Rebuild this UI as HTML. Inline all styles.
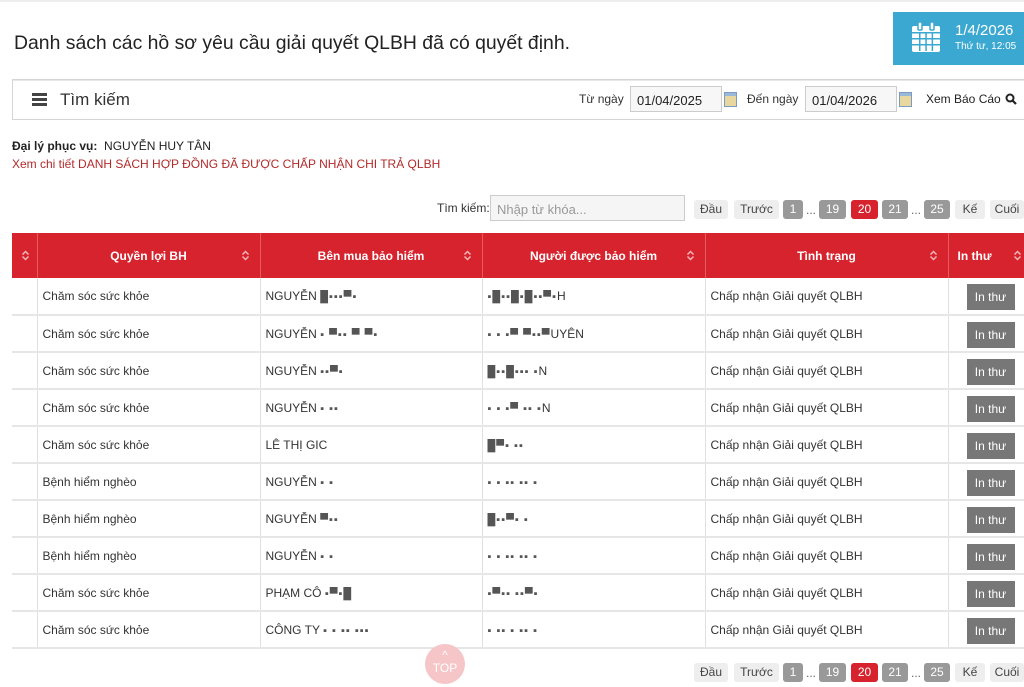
<!DOCTYPE html>
<html><head><meta charset="utf-8"><style>
*{box-sizing:border-box;margin:0;padding:0}
body{width:1024px;height:687px;overflow:hidden;background:#fff;font-family:"Liberation Sans",sans-serif;color:#333;position:relative}
.abs{position:absolute}
.topline{top:0;left:0;width:1024px;height:2px;background:#eee}
h1{position:absolute;left:14px;top:32px;font-size:19.4px;font-weight:normal;color:#222}
.date{left:893px;top:12px;width:131px;height:53px;background:#3aa8d0;color:#fff}
.bar{left:12px;top:79px;width:1012px;height:41px;border:1px solid #d5d5d5;border-right:none;box-shadow:inset 0 1px 0 #e8e8e8}
.inp{position:absolute;height:26px;border:1px solid #ccc;background:#f7f7f7;font-size:13px;padding:6px 6px;color:#222}
.cal{position:absolute;width:13px;height:15px;background:linear-gradient(#9ab8d8 0 3px,#e8d8a0 3px);border:1px solid #7a9cc0}
.pg{position:absolute;height:19px;font-size:12px;line-height:19px;text-align:center;border-radius:3px}
.pl{background:#eee;color:#444}
.pn{background:#999;color:#fff}
.pa{background:#d7232e;color:#fff}
.dots{position:absolute;font-size:12px;color:#666}
table{position:absolute;left:12px;top:233px;border-collapse:collapse;font-size:12px;table-layout:fixed;width:1026px}
th{background:#d7232e;color:#fff;height:45px;font-weight:bold;border-right:1px solid #e85a60;position:relative;text-align:center}
th svg{position:absolute;right:10px;top:17px}
td{height:37px;border-right:1px solid #e0e0e0;border-bottom:2px solid #e6e6e6;padding-left:5px;color:#333;white-space:nowrap;overflow:hidden}
.bl{color:#555;letter-spacing:1px;font-size:11px}
.btn{display:inline-block;background:#777;color:#fff;width:48px;height:26px;line-height:26px;text-align:center;font-size:12px;margin-left:13px;margin-top:2px}
</style></head><body>
<div class="abs topline"></div>
<h1>Danh sách các hồ sơ yêu cầu giải quyết QLBH đã có quyết định.</h1>
<div class="abs date">
<svg class="abs" style="left:18px;top:9px" width="30" height="32" viewBox="0 0 30 32"><rect x="1" y="5" width="28" height="26" rx="2" fill="#fff"/><rect x="7" y="1" width="4" height="8" rx="1" fill="#fff" stroke="#3aa8d0" stroke-width="1.5"/><rect x="19" y="1" width="4" height="8" rx="1" fill="#fff" stroke="#3aa8d0" stroke-width="1.5"/><g fill="#3aa8d0"><rect x="1" y="11" width="28" height="1.5"/><rect x="1" y="17" width="28" height="1.5"/><rect x="1" y="23" width="28" height="1.5"/><rect x="8" y="11" width="1.5" height="19"/><rect x="14.3" y="11" width="1.5" height="19"/><rect x="20.6" y="11" width="1.5" height="19"/></g></svg>
<div class="abs" style="left:62px;top:10px;font-size:15px">1/4/2026</div>
<div class="abs" style="left:62px;top:29px;font-size:10px">Thứ tư, 12:05</div>
</div>
<div class="abs bar">
<div class="abs" style="left:19px;top:13px;width:15px;height:13px;border-top:3px solid #444;border-bottom:3px solid #444"><div style="margin-top:2px;height:3px;background:#444"></div></div>
<div class="abs" style="left:47px;top:10px;font-size:17px;color:#333">Tìm kiếm</div>
<div class="abs" style="left:566px;top:12px;font-size:12px">Từ ngày</div>
<div class="inp" style="left:617px;top:6px;width:92px">01/04/2025</div>
<div class="cal" style="left:711px;top:12px"></div>
<div class="abs" style="left:734px;top:12px;font-size:12px">Đến ngày</div>
<div class="inp" style="left:792px;top:6px;width:92px">01/04/2026</div>
<div class="cal" style="left:886px;top:12px"></div>
<div class="abs" style="left:913px;top:12px;font-size:12px;color:#222">Xem Báo Cáo</div>
<svg class="abs" style="left:992px;top:13px" width="12" height="12" viewBox="0 0 12 12"><circle cx="5" cy="5" r="3.5" fill="none" stroke="#222" stroke-width="2"/><path d="M7.5 7.5L11 11" stroke="#222" stroke-width="2.2"/></svg>
</div>
<div class="abs" style="left:12px;top:139px;font-size:12px;color:#222"><b>Đại lý phục vụ:</b>&nbsp; NGUYỄN HUY TÂN</div>
<div class="abs" style="left:12px;top:157px;font-size:12px;color:#b22a2a">Xem chi tiết DANH SÁCH HỢP ĐỒNG ĐÃ ĐƯỢC CHẤP NHẬN CHI TRẢ QLBH</div>
<div class="abs" style="left:437px;top:201px;font-size:12px">Tìm kiếm:</div>
<div class="inp" style="left:490px;top:195px;width:195px;height:26px;background:#f5f5f5;color:#999">Nhập từ khóa...</div>

<div class="pg pl" style="left:694px;top:200px;width:34px">Đầu</div>
<div class="pg pl" style="left:734px;top:200px;width:45px">Trước</div>
<div class="pg pn" style="left:783px;top:200px;width:20px">1</div>
<div class="dots" style="left:806px;top:203px">...</div>
<div class="pg pn" style="left:819px;top:200px;width:27px">19</div>
<div class="pg pa" style="left:851px;top:200px;width:27px">20</div>
<div class="pg pn" style="left:882px;top:200px;width:26px">21</div>
<div class="dots" style="left:911px;top:203px">...</div>
<div class="pg pn" style="left:924px;top:200px;width:26px">25</div>
<div class="pg pl" style="left:955px;top:200px;width:30px">Kế</div>
<div class="pg pl" style="left:990px;top:200px;width:34px">Cuối</div>

<table>
<colgroup><col style="width:25px"><col style="width:223px"><col style="width:222px"><col style="width:223px"><col style="width:243px"><col style="width:90px"></colgroup>
<tr><th><svg style="right:7px" width="9" height="11" viewBox="0 0 9 11"><path d="M1.5 4.5L4.5 1.5 7.5 4.5M1.5 6.5L4.5 9.5 7.5 6.5" fill="none" stroke="#f5b5b8" stroke-width="1.5"/></svg></th>
<th>Quyền lợi BH<svg width="9" height="11" viewBox="0 0 9 11"><path d="M1.5 4.5L4.5 1.5 7.5 4.5M1.5 6.5L4.5 9.5 7.5 6.5" fill="none" stroke="#f5b5b8" stroke-width="1.5"/></svg></th>
<th>Bên mua bảo hiểm<svg width="9" height="11" viewBox="0 0 9 11"><path d="M1.5 4.5L4.5 1.5 7.5 4.5M1.5 6.5L4.5 9.5 7.5 6.5" fill="none" stroke="#f5b5b8" stroke-width="1.5"/></svg></th>
<th>Người được bảo hiểm<svg width="9" height="11" viewBox="0 0 9 11"><path d="M1.5 4.5L4.5 1.5 7.5 4.5M1.5 6.5L4.5 9.5 7.5 6.5" fill="none" stroke="#f5b5b8" stroke-width="1.5"/></svg></th>
<th>Tình trạng<svg width="9" height="11" viewBox="0 0 9 11"><path d="M1.5 4.5L4.5 1.5 7.5 4.5M1.5 6.5L4.5 9.5 7.5 6.5" fill="none" stroke="#f5b5b8" stroke-width="1.5"/></svg></th>
<th style="text-align:left;padding-left:9px">In thư<svg style="right:16px" width="9" height="11" viewBox="0 0 9 11"><path d="M1.5 4.5L4.5 1.5 7.5 4.5M1.5 6.5L4.5 9.5 7.5 6.5" fill="none" stroke="#f5b5b8" stroke-width="1.5"/></svg></th></tr>
<tr><td></td><td>Chăm sóc sức khỏe</td><td>NGUYỄN <span class="bl">█▪▪▪▀▪</span></td><td><span class="bl">▪█▪▪█▪█▪▪▀▪</span>H</td><td>Chấp nhận Giải quyết QLBH</td><td><span class="btn">In thư</span></td></tr>
<tr><td></td><td>Chăm sóc sức khỏe</td><td>NGUYỄN <span class="bl">▪ ▀▪▪ ▀  ▀▪</span></td><td><span class="bl">▪ ▪ ▪▀ ▀▪▪▀</span>UYÊN</td><td>Chấp nhận Giải quyết QLBH</td><td><span class="btn">In thư</span></td></tr>
<tr><td></td><td>Chăm sóc sức khỏe</td><td>NGUYỄN <span class="bl">▪▪▀▪</span></td><td><span class="bl">█▪▪█▪▪▪ ▪</span>N</td><td>Chấp nhận Giải quyết QLBH</td><td><span class="btn">In thư</span></td></tr>
<tr><td></td><td>Chăm sóc sức khỏe</td><td>NGUYỄN <span class="bl">▪ ▪▪</span></td><td><span class="bl">▪ ▪ ▪▀ ▪▪ ▪</span>N</td><td>Chấp nhận Giải quyết QLBH</td><td><span class="btn">In thư</span></td></tr>
<tr><td></td><td>Chăm sóc sức khỏe</td><td>LÊ THỊ GIC</td><td><span class="bl">█▀▪ ▪▪</span></td><td>Chấp nhận Giải quyết QLBH</td><td><span class="btn">In thư</span></td></tr>
<tr><td></td><td>Bệnh hiểm nghèo</td><td>NGUYỄN <span class="bl">  ▪ ▪</span></td><td><span class="bl">▪ ▪ ▪▪ ▪▪ ▪</span></td><td>Chấp nhận Giải quyết QLBH</td><td><span class="btn">In thư</span></td></tr>
<tr><td></td><td>Bệnh hiểm nghèo</td><td>NGUYỄN <span class="bl">▀▪▪</span></td><td><span class="bl">█▪▪▀▪ ▪</span></td><td>Chấp nhận Giải quyết QLBH</td><td><span class="btn">In thư</span></td></tr>
<tr><td></td><td>Bệnh hiểm nghèo</td><td>NGUYỄN <span class="bl">  ▪ ▪</span></td><td><span class="bl">▪ ▪ ▪▪ ▪▪ ▪</span></td><td>Chấp nhận Giải quyết QLBH</td><td><span class="btn">In thư</span></td></tr>
<tr><td></td><td>Chăm sóc sức khỏe</td><td>PHẠM CÔ <span class="bl">▪▀▪█</span></td><td><span class="bl">▪▀▪▪ ▪▪▀▪</span></td><td>Chấp nhận Giải quyết QLBH</td><td><span class="btn">In thư</span></td></tr>
<tr><td></td><td>Chăm sóc sức khỏe</td><td>CÔNG TY <span class="bl">▪ ▪ ▪▪ ▪▪▪</span></td><td><span class="bl">▪ ▪▪ ▪ ▪▪ ▪</span></td><td>Chấp nhận Giải quyết QLBH</td><td><span class="btn">In thư</span></td></tr>
</table>

<div class="abs" style="left:425px;top:644px;width:40px;height:40px;border-radius:50%;background:#f6c5c7;color:#fff;font-size:12px;text-align:center;line-height:13px;padding-top:5px">^<br>TOP</div>

<div class="pg pl" style="left:694px;top:663px;width:34px">Đầu</div>
<div class="pg pl" style="left:734px;top:663px;width:45px">Trước</div>
<div class="pg pn" style="left:783px;top:663px;width:20px">1</div>
<div class="dots" style="left:806px;top:666px">...</div>
<div class="pg pn" style="left:819px;top:663px;width:27px">19</div>
<div class="pg pa" style="left:851px;top:663px;width:27px">20</div>
<div class="pg pn" style="left:882px;top:663px;width:26px">21</div>
<div class="dots" style="left:911px;top:666px">...</div>
<div class="pg pn" style="left:924px;top:663px;width:26px">25</div>
<div class="pg pl" style="left:955px;top:663px;width:30px">Kế</div>
<div class="pg pl" style="left:990px;top:663px;width:34px">Cuối</div>
</body></html>
